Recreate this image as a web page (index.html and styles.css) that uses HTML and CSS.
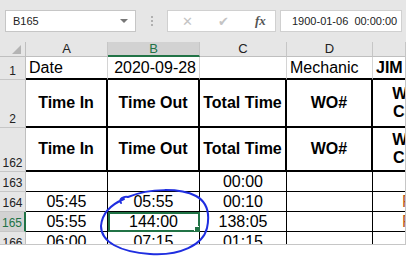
FILE: index.html
```html
<!DOCTYPE html>
<html lang="en">
<head>
    <meta charset="UTF-8">
    <title>Timesheet</title>
    <link rel="stylesheet" href="styles.css">
</head>
<body>
    <div class="formula-bar">
        <div class="name-box">
            <span>B165</span>
            <span class="caret"></span>
        </div>
        <div class="grip"><i></i><i></i><i></i></div>
        <div class="fx-box">
            <span class="fx-btn">&#x2715;</span>
            <span class="fx-btn">&#x2714;</span>
            <span class="fx-label">fx</span>
        </div>
        <div class="formula-input">1900-01-06&nbsp; 00:00:00</div>
    </div>

    <div class="sheet-wrap">
        <div class="sheet">
            <!-- column headers -->
            <div class="corner"><span class="corner-tri"></span></div>
            <div class="col-head">A</div>
            <div class="col-head active">B</div>
            <div class="col-head">C</div>
            <div class="col-head">D</div>
            <div class="col-head"></div>

            <!-- row 1 -->
            <div class="row-head">1</div>
            <div class="cell r1 left">Date</div>
            <div class="cell r1 right">2020-09-28</div>
            <div class="cell r1"></div>
            <div class="cell r1 left">Mechanic</div>
            <div class="cell r1 left bold">JIM</div>

            <!-- row 2 -->
            <div class="row-head">2</div>
            <div class="cell thick bold">Time In</div>
            <div class="cell thick bold">Time Out</div>
            <div class="cell thick bold">Total Time</div>
            <div class="cell thick bold">WO#</div>
            <div class="cell thick bold two">WO<br>Cat</div>

            <!-- row 162 -->
            <div class="row-head">162</div>
            <div class="cell thick bold">Time In</div>
            <div class="cell thick bold">Time Out</div>
            <div class="cell thick bold">Total Time</div>
            <div class="cell thick bold">WO#</div>
            <div class="cell thick bold two">WO<br>Cat</div>

            <!-- row 163 -->
            <div class="row-head">163</div>
            <div class="cell thin"></div>
            <div class="cell thin"></div>
            <div class="cell thin">00:00</div>
            <div class="cell thin"></div>
            <div class="cell thin"></div>

            <!-- row 164 -->
            <div class="row-head">164</div>
            <div class="cell thin">05:45</div>
            <div class="cell thin">05:55</div>
            <div class="cell thin">00:10</div>
            <div class="cell thin"></div>
            <div class="cell thin note">R</div>

            <!-- row 165 -->
            <div class="row-head active">165</div>
            <div class="cell thin">05:55</div>
            <div class="cell thin selected">144:00</div>
            <div class="cell thin">138:05</div>
            <div class="cell thin"></div>
            <div class="cell thin note">R</div>

            <!-- row 166 -->
            <div class="row-head">166</div>
            <div class="cell thin">06:00</div>
            <div class="cell thin">07:15</div>
            <div class="cell thin">01:15</div>
            <div class="cell thin"></div>
            <div class="cell thin"></div>
        </div>

        <svg class="ink" width="406" height="256" viewBox="0 0 406 256">
            <path d="M121,203 C118,199 124,196 128,197 C150,188 180,188 196,196 C207,202 210,214 207,228 C203,245 180,256 150,254 C120,252 101,242 101,226 C102,213 110,205 124,199"
                  fill="none" stroke="#1f2ee0" stroke-width="2" stroke-linecap="round"/>
        </svg>
    </div>
</body>
</html>
```

FILE: styles.css
```css
* {
    margin: 0;
    padding: 0;
    box-sizing: border-box;
}

body {
    width: 406px;
    height: 256px;
    overflow: hidden;
    background: #ffffff;
    font-family: 'Liberation Sans', Arial, sans-serif;
}

/* formula bar */
.formula-bar {
    height: 42px;
    background: #e6e6e6;
    display: flex;
    align-items: flex-start;
    padding: 10px 0 0 5px;
}

.name-box {
    width: 131px;
    height: 22px;
    background: #fff;
    border: 1px solid #c6c6c6;
    display: flex;
    align-items: center;
    justify-content: space-between;
    padding: 0 7px 0 7px;
    font-size: 11px;
    color: #222;
}

.caret {
    width: 0;
    height: 0;
    border-left: 4px solid transparent;
    border-right: 4px solid transparent;
    border-top: 4px solid #777;
}

.grip {
    width: 31px;
    height: 22px;
    display: flex;
    flex-direction: column;
    align-items: center;
    justify-content: center;
    gap: 2px;
}

.grip i {
    width: 2px;
    height: 2px;
    background: #b0b0b0;
}

.fx-box {
    width: 109px;
    height: 22px;
    background: #fff;
    border: 1px solid #d0d0d0;
    display: flex;
    align-items: center;
    padding: 0 0 0 14px;
}

.fx-btn {
    width: 36px;
    font-size: 13px;
    color: #c4c4c4;
    font-family: 'DejaVu Sans', sans-serif;
}

.fx-label {
    font-family: 'Liberation Serif', serif;
    font-style: italic;
    font-weight: bold;
    font-size: 13px;
    color: #555;
    padding-left: 1px;
}

.formula-input {
    margin-left: 4px;
    width: 122px;
    height: 22px;
    background: #fff;
    border: 1px solid #d0d0d0;
    font-size: 11px;
    color: #222;
    display: flex;
    align-items: center;
    padding-left: 11px;
    white-space: nowrap;
}

/* worksheet */
.sheet-wrap {
    position: relative;
    height: 214px;
}

.sheet {
    width: 406px;
    height: 203px;
    overflow: hidden;
    border-right: 1px solid #c6c6c6;
    border-bottom: 1px solid #c6c6c6;
    display: grid;
    grid-template-columns: 26px 82px 92px 87px 86px 68px;
    grid-template-rows: 15px 23px 48px 44px 20px 20px 20px 20px;
}

.corner {
    background: #e6e6e6;
    border-right: 1px solid #bfbfbf;
    border-bottom: 1px solid #bfbfbf;
    position: relative;
}

.corner-tri {
    position: absolute;
    right: 4px;
    bottom: 2px;
    width: 0;
    height: 0;
    border-left: 9px solid transparent;
    border-bottom: 9px solid #b4b4b4;
}

.col-head {
    background: #e6e6e6;
    border-right: 1px solid #c6c6c6;
    border-bottom: 1px solid #bfbfbf;
    font-size: 13px;
    line-height: 14px;
    text-align: center;
    color: #222;
}

.col-head.active {
    background: #d2d2d2;
    border-bottom: 2px solid #217346;
    color: #217346;
}

.row-head {
    background: #e6e6e6;
    border-right: 1px solid #bfbfbf;
    border-bottom: 1px solid #c6c6c6;
    font-size: 12px;
    color: #222;
    display: flex;
    align-items: flex-end;
    justify-content: center;
    padding-bottom: 1px;
}

.row-head.active {
    background: #d2d2d2;
    color: #217346;
    border-right: 2px solid #217346;
}

.cell {
    font-size: 16px;
    color: #000;
    border-right: 1px solid #d4d4d4;
    border-bottom: 1px solid #d4d4d4;
    display: flex;
    align-items: center;
    justify-content: center;
    white-space: nowrap;
    overflow: hidden;
}

.cell.r1 {
    border-bottom: 2px solid #000;
    align-items: flex-end;
    padding: 0 3px 1px;
}

.cell.left {
    justify-content: flex-start;
}

.cell.right {
    justify-content: flex-end;
}

.bold {
    font-weight: bold;
}

.cell.thick {
    border-right: 2px solid #000;
    border-bottom: 2px solid #000;
    padding-bottom: 1px;
}

.cell.two {
    text-align: center;
    line-height: 18px;
}

.cell.thin {
    border-right: 1px solid #000;
    border-bottom: 1px solid #000;
    padding-top: 1px;
}

.cell.note {
    color: #b65a1c;
    justify-content: flex-start;
    padding-left: 29px;
}

.cell.selected {
    position: relative;
    outline: 2px solid #217346;
    outline-offset: -2px;
}

.cell.selected::after {
    content: '';
    position: absolute;
    right: -3px;
    bottom: -3px;
    width: 6px;
    height: 6px;
    background: #217346;
    border: 1px solid #fff;
}

.ink {
    position: absolute;
    left: 0;
    top: -42px;
    pointer-events: none;
}
```
